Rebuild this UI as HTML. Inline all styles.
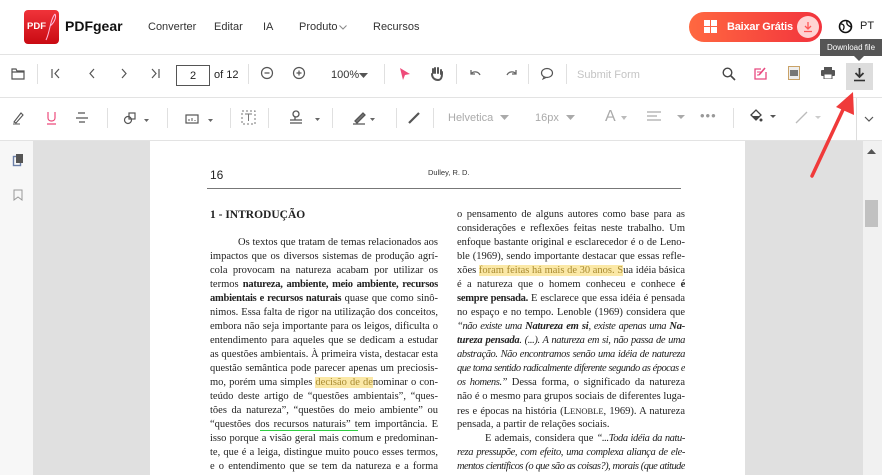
<!DOCTYPE html>
<html><head><meta charset="utf-8"><style>
*{margin:0;padding:0;box-sizing:border-box}
body{width:882px;height:475px;overflow:hidden;background:#fff;font-family:"Liberation Sans",sans-serif;position:relative}
.a{position:absolute}
.nav{font-size:11px;color:#333;top:21px}
.tb{border-bottom:1px solid #e3e3e3}
.sep{position:absolute;width:1px;height:20px;background:#e0e0e0}
.col{position:absolute;width:228px;font-family:"Liberation Serif",serif;font-size:10.5px;color:#222;line-height:14px}
.col div{text-align:justify;text-align-last:justify;height:14px;overflow:hidden}
.col div.l{text-align-last:left}
.col b{letter-spacing:-0.25px}
.hl{background:#fbe8a6;color:#a88a30}
i{font-style:italic;letter-spacing:-0.4px}
</style></head><body>
<div class="a" style="left:0;top:0;width:882px;height:55px;border-bottom:1px solid #e3e3e3"></div>
<div class="a" style="left:24px;top:10px;width:35px;height:34px;border-radius:4px;background:linear-gradient(#f0333a,#c90a12)"></div>
<div class="a" style="left:27px;top:21px;color:#fff;font-weight:bold;font-size:9.5px">PDF</div>
<svg class="a" style="left:44px;top:12px" width="14" height="30"><path d="M11 2 C6 8 6 20 2 28 M11 2 C13 6 9 12 6 14" stroke="#fbd" stroke-width="1" fill="none"/></svg>
<div class="a" style="left:65px;top:18px;font-size:14px;font-weight:bold;color:#111">PDFgear</div>
<div class="a nav" style="left:148px">Converter</div>
<div class="a nav" style="left:214px">Editar</div>
<div class="a nav" style="left:263px">IA</div>
<div class="a nav" style="left:299px">Produto</div>
<svg class="a" style="left:339px;top:25px" width="8" height="5"><path d="M0.5 0.5 L4 4 L7.5 0.5" stroke="#888" fill="none"/></svg>
<div class="a nav" style="left:373px">Recursos</div>
<div class="a" style="left:689px;top:12px;width:133px;height:30px;border-radius:15px;background:linear-gradient(90deg,#ff6840,#f2333d)"></div>
<svg class="a" style="left:704px;top:20px" width="13" height="13"><rect x="0" y="0" width="6" height="6" fill="#fff"/><rect x="7" y="0" width="6" height="6" fill="#fff"/><rect x="0" y="7" width="6" height="6" fill="#fff"/><rect x="7" y="7" width="6" height="6" fill="#fff"/></svg>
<div class="a" style="left:727px;top:21px;color:#fff;font-size:11px;font-weight:bold;letter-spacing:-0.2px">Baixar Grátis</div>
<div class="a" style="left:797px;top:16px;width:22px;height:22px;border-radius:11px;background:#ffd3d3"></div>
<svg class="a" style="left:802px;top:21px" width="12" height="12"><path d="M6 1 V8 M3 5 L6 8 L9 5 M2 10.5 H10" stroke="#f55" stroke-width="1.3" fill="none"/></svg>
<svg class="a" style="left:838px;top:19px" width="15" height="15"><circle cx="7.5" cy="7.5" r="6" stroke="#111" stroke-width="1.6" fill="none"/><path d="M3 5 C6 5 7 8 5 11 M9 2 C8 6 11 7 13 8" stroke="#111" stroke-width="1.3" fill="none"/></svg>
<div class="a" style="left:860px;top:20px;font-size:11px;color:#222">PT</div>
<div class="a tb" style="left:0;top:55px;width:882px;height:43px"></div>
<svg class="a" style="left:11px;top:68px" width="14" height="12"><path d="M1 1 H5 L6 3 H13 V11 H1 Z M1 4 H13" stroke="#555" stroke-width="1.2" fill="none"/></svg>
<div class="sep" style="left:37px;top:64px"></div>
<svg class="a" style="left:50px;top:68px" width="100" height="11"><path d="M2 1 V10 M9 1 L5 5.5 L9 10 M44 1 L40 5.5 L44 10 M72 1 L76 5.5 L72 10" stroke="#555" stroke-width="1.2" fill="none"/></svg>
<svg class="a" style="left:150px;top:68px" width="12" height="11"><path d="M2 1 L6 5.5 L2 10 M9 1 V10" stroke="#555" stroke-width="1.2" fill="none"/></svg>
<div class="a" style="left:176px;top:65px;width:34px;height:21px;border:1px solid #555;font-size:11px;text-align:center;line-height:20px;color:#222">2</div>
<div class="a" style="left:214px;top:69px;font-size:11px;color:#222">of 12</div>
<div class="sep" style="left:248px;top:64px"></div>
<svg class="a" style="left:260px;top:66px" width="50" height="14"><circle cx="7" cy="7" r="5.5" stroke="#555" stroke-width="1.2" fill="none"/><path d="M4.5 7 H9.5 M36.5 7 H41.5 M39 4.5 V9.5" stroke="#555" stroke-width="1.2"/><circle cx="39" cy="7" r="5.5" stroke="#555" stroke-width="1.2" fill="none"/></svg>
<div class="a" style="left:331px;top:69px;font-size:11px;color:#333">100%</div>
<svg class="a" style="left:359px;top:73px" width="9" height="5"><path d="M0 0 H9 L4.5 5Z" fill="#555"/></svg>
<div class="sep" style="left:384px;top:64px"></div>
<svg class="a" style="left:399px;top:67px" width="12" height="14"><path d="M1 1 L11 7 L6 8 L4 13 Z" fill="#ee4b7a"/></svg>
<svg class="a" style="left:430px;top:66px" width="14" height="15"><path d="M3 7 V3 M5 7 V2 M8 7 V2 M11 8 V4 M2 8 C2 12 5 14 8 14 C11 14 12 11 12 8 V6" stroke="#555" stroke-width="2" fill="none" stroke-linecap="round"/></svg>
<div class="sep" style="left:456px;top:64px"></div>
<svg class="a" style="left:469px;top:68px" width="50" height="12"><path d="M2 2 V6 H6 M2 6 C4 3 9 3 11 7 M47 2 V6 H43 M47 6 C45 3 40 3 38 7" stroke="#666" stroke-width="1.3" fill="none"/></svg>
<div class="sep" style="left:528px;top:64px"></div>
<svg class="a" style="left:540px;top:67px" width="14" height="13"><ellipse cx="7" cy="6" rx="5.5" ry="4.5" stroke="#555" stroke-width="1.2" fill="none"/><path d="M4 10 L3 12 L6 10.5" stroke="#555" fill="none"/></svg>
<div class="sep" style="left:566px;top:64px"></div>
<div class="a" style="left:577px;top:69px;font-size:11px;color:#c4c4c4">Submit Form</div>
<svg class="a" style="left:722px;top:67px" width="14" height="14"><circle cx="5.5" cy="5.5" r="4.3" stroke="#444" stroke-width="1.4" fill="none"/><path d="M8.5 8.5 L13 13" stroke="#444" stroke-width="1.6"/></svg>
<svg class="a" style="left:754px;top:66px" width="14" height="14"><path d="M12 6 V13 H1 V3 H7" stroke="#e8497f" stroke-width="1.3" fill="none"/><path d="M5 9 L11 2" stroke="#e8497f" stroke-width="1.6"/><path d="M3 6 H7 M3 9 H5" stroke="#e8497f"/></svg>
<svg class="a" style="left:788px;top:66px" width="12" height="14"><rect x="0.5" y="0.5" width="11" height="13" stroke="#c9a267" fill="#eee"/><rect x="2" y="4" width="8" height="6" fill="#777"/></svg>
<svg class="a" style="left:821px;top:67px" width="14" height="12"><rect x="3" y="0" width="8" height="3" fill="#555"/><rect x="0" y="3" width="14" height="6" rx="1" fill="#555"/><rect x="3" y="7" width="8" height="5" fill="#fff" stroke="#555"/></svg>
<div class="a" style="left:846px;top:63px;width:27px;height:27px;background:#ddd"></div>
<svg class="a" style="left:853px;top:68px" width="13" height="14"><path d="M6.5 0 V9 M2.5 5 L6.5 9 L10.5 5" stroke="#333" stroke-width="1.8" fill="none"/><path d="M1 12.5 H12" stroke="#333" stroke-width="1.6"/></svg>
<div class="a" style="left:820px;top:39px;width:62px;height:17px;background:#555;color:#fff;font-size:8px;line-height:17px;text-align:center">Download file</div>
<svg class="a" style="left:854px;top:56px" width="10" height="5"><path d="M0 0 H10 L5 5Z" fill="#555"/></svg>
<div class="a tb" style="left:0;top:98px;width:882px;height:43px"></div>
<svg class="a" style="left:12px;top:110px" width="250" height="16">
<path d="M2 12 L9 3 L11 5 L4 13 Z M1 14 H8" stroke="#555" stroke-width="1.1" fill="none"/>
<path d="M36 2 V8 C36 12 43 12 43 8 V2 M35 14 H44" stroke="#ec4b7c" stroke-width="1.2" fill="none"/>
<path d="M66 3 H73 M64 8 H76 M67 12 H73" stroke="#555" stroke-width="1.2" fill="none"/>
<circle cx="116" cy="10" r="3.5" stroke="#555" stroke-width="1.2" fill="none"/><rect x="117" y="3" width="6" height="6" stroke="#555" stroke-width="1.2" fill="none"/>
<path d="M132 9 L137 9 L134.5 12Z" fill="#666"/>
<rect x="174" y="5" width="12" height="8" stroke="#555" stroke-width="1.2" fill="none"/><path d="M177 11 V9 M180 11 V8 M183 11 V10" stroke="#555"/>
<path d="M196 9 L201 9 L198.5 12Z" fill="#666"/>
<rect x="230" y="1" width="13" height="13" stroke="#777" stroke-dasharray="2 2" fill="none"/><path d="M233 4 H240 M236.5 4 V11" stroke="#777"/>
</svg>
<svg class="a" style="left:285px;top:109px" width="140" height="17">
<circle cx="11" cy="5" r="3" stroke="#555" stroke-width="1.3" fill="none"/><path d="M10 8 V11 M5 11 H17 M5 14 H17" stroke="#555" stroke-width="1.3"/>
<path d="M30 9 L35 9 L32.5 12Z" fill="#666"/>
<path d="M70 12 L78 4 L80 6 L72 14 Z M68 15 H80" stroke="#555" stroke-width="1.3" fill="#777"/>
<path d="M85 9 L90 9 L87.5 12Z" fill="#666"/>
<path d="M124 14 L134 4" stroke="#555" stroke-width="2.2"/>
</svg>
<div class="sep" style="left:107px;top:108px"></div><div class="sep" style="left:167px;top:108px"></div><div class="sep" style="left:230px;top:108px"></div><div class="sep" style="left:268px;top:108px"></div><div class="sep" style="left:332px;top:108px"></div><div class="sep" style="left:396px;top:108px"></div><div class="sep" style="left:433px;top:108px"></div><div class="sep" style="left:733px;top:108px"></div><div class="sep" style="left:856px;top:98px;height:43px;background:#ddd"></div>
<div class="a" style="left:448px;top:112px;font-size:11px;color:#aaa">Helvetica</div>
<svg class="a" style="left:500px;top:115px" width="9" height="5"><path d="M0 0 H9 L4.5 5Z" fill="#aaa"/></svg>
<div class="a" style="left:535px;top:112px;font-size:11px;color:#aaa">16px</div>
<svg class="a" style="left:566px;top:115px" width="9" height="5"><path d="M0 0 H9 L4.5 5Z" fill="#aaa"/></svg>
<div class="a" style="left:605px;top:108px;font-size:16px;color:#aaa">A</div>
<svg class="a" style="left:621px;top:116px" width="6" height="4"><path d="M0 0 H6 L3 4Z" fill="#bbb"/></svg>
<svg class="a" style="left:647px;top:111px" width="40" height="12"><path d="M0 1 H14 M0 5 H10 M0 9 H14" stroke="#aaa" stroke-width="1.2"/><path d="M30 4 H38 L34 8Z" fill="#aaa"/></svg>
<div class="a" style="left:700px;top:108px;font-size:13px;color:#999;letter-spacing:1px">•••</div>
<svg class="a" style="left:748px;top:109px" width="40" height="16"><path d="M3 6 L8 1 L13 6 L8 11 Z" stroke="#444" stroke-width="1.3" fill="#fff"/><path d="M4 7 H12 L8 11Z" fill="#444"/><circle cx="13" cy="11" r="1.5" fill="#444"/><path d="M22 6 H28 L25 9Z" fill="#555"/></svg>
<svg class="a" style="left:795px;top:110px" width="30" height="14"><path d="M1 13 L12 2" stroke="#bbb" stroke-width="1.3"/><path d="M20 6 H26 L23 9Z" fill="#ccc"/></svg>
<svg class="a" style="left:864px;top:116px" width="10" height="6"><path d="M1 1 L5 5 L9 1" stroke="#555" stroke-width="1.2" fill="none"/></svg>
<div class="a" style="left:0;top:141px;width:33px;height:334px;background:#f7f7f7"></div>
<svg class="a" style="left:12px;top:153px" width="14" height="50"><rect x="1.5" y="3.5" width="7" height="9" stroke="#6b7fa8" stroke-width="1.4" fill="none"/><rect x="4" y="1" width="7" height="9" fill="#555"/><path d="M2 37 V47 L6 44 L10 47 V37 Z" stroke="#999" stroke-width="1" fill="none"/></svg>
<div class="a" style="left:33px;top:141px;width:117px;height:334px;background:#e0e0e0"></div>
<div class="a" style="left:745px;top:141px;width:118px;height:334px;background:#e0e0e0"></div>
<div class="a" style="left:863px;top:141px;width:19px;height:334px;background:#f1f1f1"></div>
<svg class="a" style="left:867px;top:149px" width="9" height="5"><path d="M0 5 H9 L4.5 0Z" fill="#555"/></svg>
<div class="a" style="left:865px;top:200px;width:13px;height:27px;background:#c1c1c1"></div>
<div class="a" style="left:210px;top:168px;font-size:12px;color:#222">16</div>
<div class="a" style="left:428px;top:168px;font-size:7.5px;color:#333">Dulley, R. D.</div>
<div class="a" style="left:207px;top:188px;width:474px;height:1px;background:#777"></div>
<div class="a" style="left:210px;top:209px;font-family:'Liberation Serif',serif;font-weight:bold;font-size:11.5px;color:#222">1 - INTRODUÇÃO</div>
<div class="col" style="left:210px;top:236px">
<div style="padding-left:28px">Os textos que tratam de temas relacionados aos</div>
<div>impactos que os diversos sistemas de produção agrí-</div>
<div>cola provocam na natureza acabam por utilizar os</div>
<div>termos <b>natureza, ambiente, meio ambiente, recursos</b></div>
<div><b>ambientais e recursos naturais</b> quase que como sinô-</div>
<div>nimos. Essa falta de rigor na utilização dos conceitos,</div>
<div>embora não seja importante para os leigos, dificulta o</div>
<div>entendimento para aqueles que se dedicam a estudar</div>
<div>as questões ambientais. À primeira vista, destacar esta</div>
<div>questão semântica pode parecer apenas um preciosis-</div>
<div>mo, porém uma simples <span class="hl">decisão de de</span>nominar o con-</div>
<div>teúdo deste artigo de “questões ambientais”, “ques-</div>
<div>tões da natureza”, “questões do meio ambiente” ou</div>
<div>“questões d<span style="border-bottom:1.5px solid #2ecc40">os recursos naturais” t</span>em importância. E</div>
<div>isso porque a visão geral mais comum e predominan-</div>
<div>te, que é a leiga, distingue muito pouco esses termos,</div>
<div>e o entendimento que se tem da natureza e a forma</div>
</div>
<div class="col" style="left:457px;top:208px">
<div>o pensamento de alguns autores como base para as</div>
<div>considerações e reflexões feitas neste trabalho. Um</div>
<div>enfoque bastante original e esclarecedor é o de Leno-</div>
<div>ble (1969), sendo importante destacar que essas refle-</div>
<div>xões <span class="hl">foram feitas há mais de 30 anos. S</span>ua idéia básica</div>
<div>é a natureza que o homem conheceu e conhece <b>é</b></div>
<div><b>sempre pensada.</b> E esclarece que essa idéia é pensada</div>
<div>no espaço e no tempo. Lenoble (1969) considera que</div>
<div><i>“não existe uma <b>Natureza em si</b>, existe apenas uma <b>Na-</b></i></div>
<div><i><b>tureza pensada</b>. (...). A natureza em si, não passa de uma</i></div>
<div><i>abstração. Não encontramos senão uma idéia de natureza</i></div>
<div><i style="letter-spacing:-0.55px">que toma sentido radicalmente diferente segundo as épocas e</i></div>
<div><i>os homens.”</i> Dessa forma, o significado da natureza</div>
<div>não é o mesmo para grupos sociais de diferentes luga-</div>
<div>res e épocas na história (L<span style="font-size:8.5px">ENOBLE</span>, 1969). A natureza é</div>
<div class="l">pensada, a partir de relações sociais.</div>
<div style="padding-left:28px">E ademais, considera que <i>“...Toda idéia da natu-</i></div>
<div><i>reza pressupõe, com efeito, uma complexa aliança de ele-</i></div>
<div><i style="letter-spacing:-0.55px">mentos científicos (o que são as coisas?), morais (que atitude</i></div>
</div>
<svg class="a" style="left:800px;top:85px" width="70" height="100"><path d="M12 91 L48 14" stroke="#f03a3a" stroke-width="3.5" stroke-linecap="round"/><path d="M53 7 L54 30 L36 22 Z" fill="#f03a3a"/></svg>
</body></html>
